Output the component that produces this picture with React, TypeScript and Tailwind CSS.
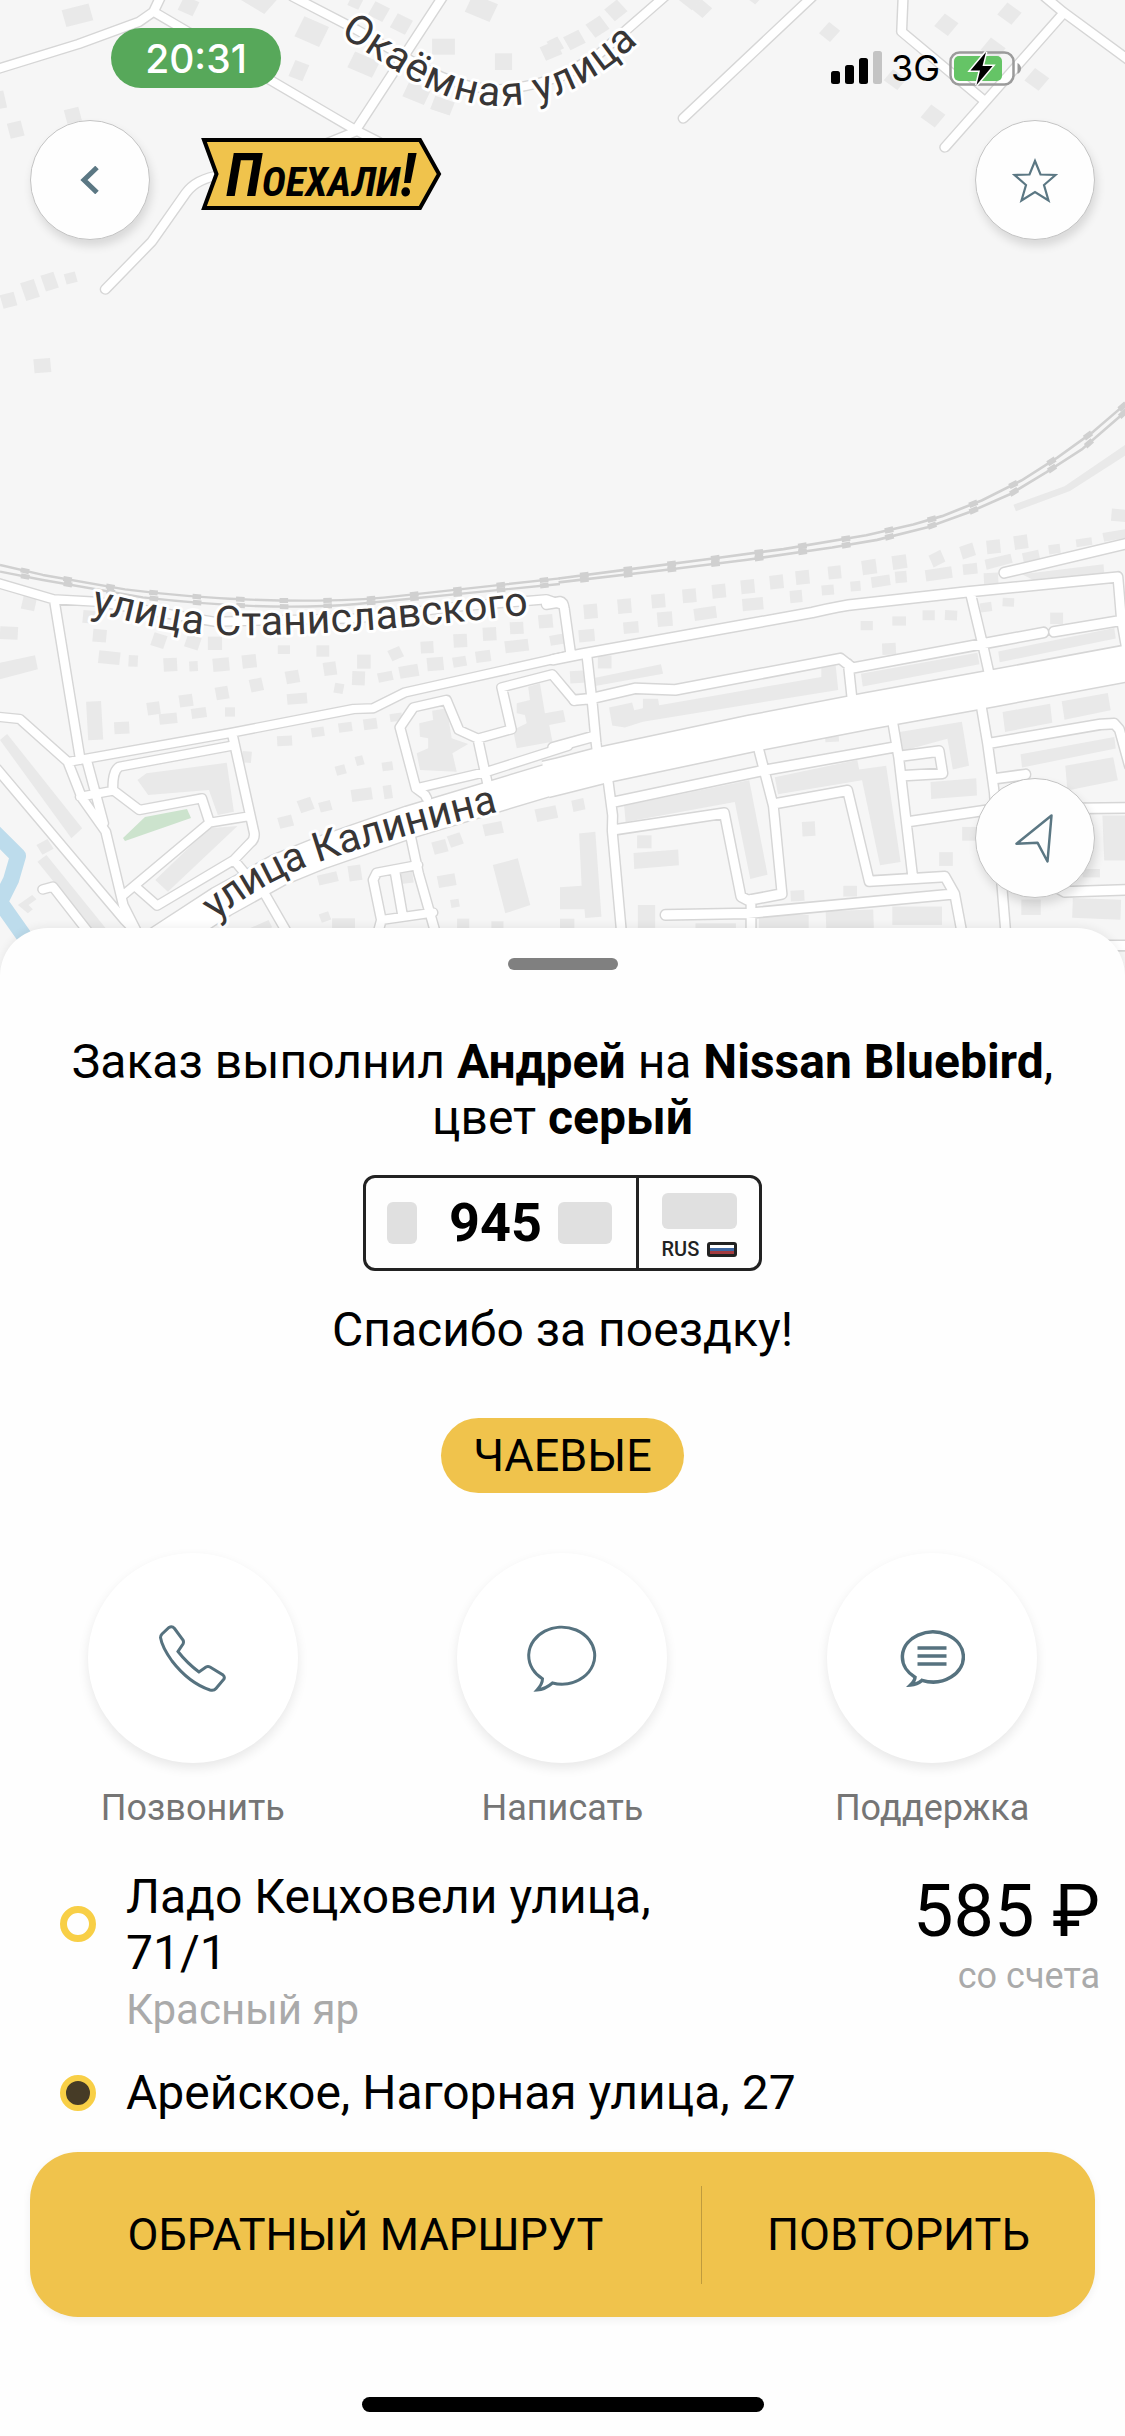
import { useState } from "react";

type Tile = {
  transform: string;
  roads: string[];
  wide: string[];
  rails: string[];
  blocks: string[];
  // x, y, width, height, rotation
  houses: number[][];
};

const TILES: Tile[] = [
  {
    transform: "scale(0.3571 0.3333)",
    roads: [
      "M-10 208L220 132L390 65L430 35L450 -10",
      "M430 35L995 390L1060 425",
      "M995 392L1240 -10",
      "M820 -10L1000 90L1180 200Q1290 268 1400 268Q1500 262 1600 215",
      "M295 868L425 725L520 580Q550 535 620 525L800 480L995 395",
    ],
    wide: [],
    rails: [],
    blocks: ["M675 0H775L740 42Z"],
    houses: [
      [178, 20, 78, 52, -15], [505, -5, 46, 46, 25], [835, 62, 76, 66, 25], [978, -10, 34, 34, 25],
      [1038, 12, 46, 46, 28], [1100, 48, 48, 48, 28], [1310, -5, 76, 58, 24], [1210, 116, 64, 48, 0],
      [1386, 160, 48, 50, 0], [1518, 130, 50, 44, -24], [980, 168, 76, 52, 25], [816, 186, 42, 52, 22],
      [1134, 254, 66, 50, 24], [1210, 296, 58, 42, 20], [-25, 275, 40, 52, -12], [183, 325, 42, 42, -14],
      [24, 366, 40, 46, -14], [64, 842, 40, 56, -18], [120, 820, 38, 50, -18], [182, 818, 32, 32, -15],
      [4, 880, 40, 42, -15], [95, 1076, 47, 42, -5],
    ],
  },
  {
    transform: "translate(560 0) scale(0.3604 0.3333)",
    roads: [
      "M-10 238L110 160L200 75L290 -10",
      "M342 355L700 -10",
      "M952 -10L948 95L1175 300",
      "M1395 42L1068 442",
      "M1345 -10L1395 35L1590 190",
    ],
    wide: [],
    rails: [],
    blocks: [],
    houses: [
      [-30, 115, 34, 40, -28], [16, 98, 48, 44, -28], [80, 56, 48, 48, -35], [132, 8, 46, 46, -40],
      [340, -25, 46, 46, 40], [374, 6, 40, 40, 42], [526, -20, 28, 28, 40], [728, 74, 40, 44, 40],
      [1048, 50, 48, 48, 38], [1222, 18, 50, 46, 38], [1176, 124, 52, 46, 38], [1298, 214, 50, 48, 38],
      [1010, 324, 50, 48, 38], [906, 218, 48, 42, 38],
    ],
  },
  {
    transform: "translate(0 500) scale(0.3571 0.3333)",
    roads: [
      "M-10 248L150 298L270 305L600 365L1000 355L1300 318L1450 305L1530 298L1568 312",
      "M152 300L225 780",
      "M-10 650L55 657L190 786L640 700L990 627L1045 625L1135 577L1590 468",
      "M645 738L335 800Q315 810 316 870L390 930L565 895L587 968L690 950",
      "M225 890L318 872",
      "M650 700L712 1000Q714 1018 700 1030L655 1080L440 1217L385 1165",
      "M587 968L340 1190",
      "M245 790L290 970",
      "M190 786L230 895L296 995L345 1215L385 1300",
      "M-10 805L350 1262L385 1300",
      "M120 1168L148 1160L250 1300",
      "M655 1080L690 1125",
      "M1195 895L1190 885L1165 865L1120 682L1158 622L1250 600L1285 690L1338 716L1432 688L1405 562L1546 523L1608 602",
      "M1338 716L1365 850",
      "M1165 865L1195 858L1365 815L1590 738",
      "M1150 1010L1172 1120L1220 1300",
      "M1170 1095L1055 1118L1045 1140L1068 1260L1058 1300M1068 1260L1212 1238",
      "M1105 1108L1128 1250",
      "M735 1170L805 1300",
    ],
    wide: ["M420 1345L620 1205L780 1110L900 1058L1150 965L1568 830L1620 818"],
    rails: [
      "M0 195L120 225L350 268Q600 302 850 302Q1000 302 1100 290L1568 235",
      "M0 215L120 240L400 292Q750 335 1000 312L1568 252",
    ],
    blocks: [
      "M0 720L20 702L230 985L200 1015Z",
      "M385 840L410 820L635 788L655 935L610 945L585 870L415 885Z",
      "M435 1140L585 985L665 978L470 1175Z",
      "M105 1085L130 1065L300 1290H260Z",
      "M1210 632L1251 625L1265 715L1311 732L1267 760L1279 815L1176 810L1167 760L1199 745V715L1176 710L1174 670L1213 660Z",
      "M1479 560L1512 550L1526 640L1577 630L1584 665L1538 675L1547 725L1447 745L1437 690L1475 670L1470 645L1447 640V610L1484 600Z",
      "M1380 1095L1450 1075L1485 1215L1415 1240Z",
      "M50 1215L90 1185L102 1198L80 1215L92 1228L78 1240Z",
      "M0 488L98 466L106 508L0 538Z",
    ],
    houses: [
      [62, 290, 38, 40, 12], [232, 332, 46, 38, 5], [260, 388, 38, 38, 5], [0, 380, 50, 38, 3],
      [426, 402, 38, 40, 18], [520, 408, 40, 38, 18], [582, 410, 40, 40, 0], [276, 454, 60, 38, 6],
      [360, 466, 26, 34, 3], [458, 474, 38, 40, -3], [530, 484, 24, 30, -3], [596, 474, 46, 40, -5],
      [678, 464, 40, 40, -6], [778, 436, 34, 26, 0], [886, 436, 36, 34, 0], [906, 486, 36, 40, -8],
      [800, 512, 38, 38, -10], [1000, 464, 38, 42, 0], [1090, 444, 36, 34, -25], [1178, 424, 36, 36, -3],
      [1270, 402, 38, 40, -3], [1352, 382, 38, 40, -3], [1428, 366, 38, 36, -3], [1508, 344, 40, 40, -5],
      [1540, 404, 40, 30, -10], [1058, 516, 42, 28, -12], [1118, 496, 54, 36, -10], [1196, 472, 46, 40, -5],
      [1268, 470, 38, 30, -10], [1332, 452, 42, 34, -8], [1414, 420, 66, 36, -7], [986, 514, 36, 42, 2],
      [936, 550, 26, 30, 10], [804, 580, 56, 32, -5], [700, 536, 36, 38, -12], [604, 560, 36, 38, -10],
      [502, 584, 38, 36, -8], [412, 606, 36, 38, -8], [446, 640, 50, 32, -6], [536, 624, 42, 30, -8],
      [630, 622, 28, 28, 0], [244, 604, 42, 116, -3], [320, 666, 42, 36, -3], [776, 708, 42, 30, -3],
      [872, 682, 36, 28, -8], [948, 668, 38, 28, -8], [1018, 656, 38, 32, -8], [1092, 640, 34, 24, -8],
      [940, 796, 28, 28, -15], [996, 768, 22, 28, -15], [1070, 786, 30, 26, -8], [678, 754, 26, 34, 5],
      [984, 866, 58, 36, -8], [1074, 856, 24, 40, -8], [836, 896, 40, 38, -20], [894, 904, 34, 30, -15],
      [780, 948, 40, 34, -15], [1212, 1022, 40, 38, -15], [1256, 1002, 38, 36, -20], [1354, 968, 54, 36, -12],
      [1500, 922, 60, 38, -12], [890, 1120, 56, 30, -14], [976, 1096, 36, 46, -8], [1120, 1110, 36, 40, -8],
      [1226, 1124, 50, 36, -10], [1262, 1198, 24, 24, -10], [896, 1238, 28, 26, -20], [930, 1255, 64, 34, 0],
      [1280, 1256, 34, 34, 0], [1376, 1264, 34, 24, 0], [108, 1024, 36, 34, -30], [700, 1272, 60, 24, -25],
    ],
  },
  {
    transform: "translate(560 360) scale(0.3604 0.3827)",
    roads: [
      "M-38 638L0 632Q10 634 12 650L30 770",
      "M-20 783L60 768L700 660Q780 642 825 638L1130 606L1548 567L1558 680",
      "M75 775L90 900L100 1000L108 1060",
      "M39 889L85 885L210 858L320 862L778 780L812 805L1165 743L1342 712",
      "M800 795L812 900",
      "M1138 606L1172 740L1198 850",
      "M1370 710L1560 680M1560 690L1575 770",
      "M-20 1013L95 983",
      "M1232 556L1580 478",
      "M132 1090L146 1190L145 1230L172 1510",
      "M150 1155L550 1075L925 1012",
      "M548 1005L592 1165L616 1395L522 1412L502 1402L456 1184L155 1227",
      "M592 1160L798 1125L858 1362L1068 1350L1095 1395L1118 1510",
      "M292 1450L520 1446L1085 1396",
      "M530 1410V1510",
      "M922 940L940 1040L978 1345",
      "M945 1035L1052 1022L1062 1080L955 1086",
      "M1168 900L1186 1000L1205 1130L1238 1510",
      "M1188 1002L1500 952L1538 950L1552 965L1580 1060",
      "M1200 1095L1292 1083",
      "M970 1206L1200 1174L1580 1170",
      "M1390 1175L1360 1200L1362 1370L1400 1390L1580 1384",
      "M1480 1530H1580",
    ],
    wide: ["M-40 1096L0 1087L120 1058L530 976L850 918L1200 858L1600 788"],
    rails: [
      "M-4 571L190 547L430 518L620 494L850 458L980 430L1060 408L1170 367L1280 315L1380 255L1480 187L1575 110",
      "M-4 581L280 550L520 522L755 490L880 470L1020 437L1135 398L1250 350L1350 293L1450 232L1575 130",
    ],
    blocks: [
      "M1258 378L1400 330L1568 222V250L1415 342L1265 395Z",
      "M98 830L280 795L286 820L98 852Z",
      "M136 908L200 895L206 915L230 910V885H272L275 902L725 828V805L765 798L772 862L230 945L180 960L145 955Z",
      "M835 820L1158 765L1164 795L840 853Z",
      "M1216 762L1538 700L1542 728L1220 790Z",
      "M178 1165L525 1098L576 1345L528 1356L485 1155L182 1207Z",
      "M596 1090L825 1045L830 1070L905 1060L945 1312L888 1320L838 1098L605 1135Z",
      "M942 972L1115 945L1135 1060L1090 1070L1075 990L950 1022Z",
      "M1228 920L1360 898L1366 948L1235 972Z",
      "M1392 892L1520 870L1528 915L1400 940Z",
      "M1278 1030L1538 985L1542 1015L1282 1065Z",
      "M1402 1060L1535 1038L1548 1098L1408 1125Z",
      "M1028 1103L1155 1093L1157 1138L1030 1147Z",
      "M53 1237L98 1233L115 1455L70 1458L68 1435H0V1378L60 1374Z",
      "M204 1288L328 1279L330 1320L206 1330Z",
      "M1282 560L1508 534L1510 556L1320 578Z",
      "M1505 1190H1568V1308H1510Z",
      "M1178 522L1250 506L1256 530L1184 548Z",
      "M1505 452L1568 442V465L1510 475Z",
    ],
    houses: [
      [66, 638, 38, 38, -5], [160, 624, 38, 38, -5], [254, 612, 38, 36, -5], [340, 598, 38, 36, -5],
      [422, 586, 38, 36, -6], [502, 574, 38, 36, -6], [582, 562, 38, 36, -6], [654, 550, 38, 36, -6],
      [744, 538, 36, 34, -6], [838, 522, 40, 38, -8], [922, 510, 40, 36, -8], [1028, 502, 36, 34, -25],
      [1112, 482, 38, 34, -18], [1184, 470, 38, 36, -6], [1260, 458, 38, 36, -8], [52, 704, 44, 32, -5],
      [176, 684, 42, 30, -5], [270, 658, 42, 38, -5], [372, 646, 62, 32, -8], [506, 622, 58, 32, -5],
      [638, 602, 34, 32, -5], [726, 588, 34, 26, -5], [806, 578, 28, 26, -5], [864, 564, 52, 28, -8],
      [930, 552, 32, 30, -5], [1014, 544, 74, 30, -8], [1118, 532, 40, 28, -6], [1284, 500, 46, 26, -12],
      [1356, 482, 32, 24, -8], [1432, 466, 44, 20, -8], [1530, 390, 40, 32, 5], [1176, 556, 40, 28, -3],
      [834, 682, 34, 24, 0], [922, 670, 38, 24, 0], [1006, 654, 34, 26, 0], [1068, 654, 34, 26, 3],
      [1166, 634, 32, 24, -8], [1228, 622, 32, 22, 3], [1360, 660, 36, 30, 0], [894, 740, 38, 30, -3],
      [105, 772, 38, 34, 0], [28, 812, 46, 32, -3], [34, 1148, 34, 30, -12], [672, 1206, 36, 38, -3],
      [214, 1242, 40, 34, 0], [1052, 1286, 38, 36, 0], [1116, 1220, 40, 36, 0], [216, 1424, 48, 60, 0],
      [640, 1386, 38, 28, -3], [786, 1374, 38, 28, 0], [376, 1472, 112, 20, 0], [552, 1450, 138, 40, 0],
      [738, 1438, 132, 50, -2], [922, 1428, 138, 48, 0], [1280, 1410, 54, 40, 0], [1422, 1408, 134, 52, 2],
      [1450, 1330, 48, 22, 0], [736, 984, 38, 14, -3], [0, 1460, 40, 30, 0],
    ],
  },
];

// Paths run through the middle of the letters
const LABELS = [
  { id: "okaemnaya", text: "Окаёмная улица", path: "M347 23C405 60 445 91 500 92C555 91 598 66 660 2" },
  { id: "stanislavskogo", text: "улица Станиславского", path: "M94 599C130 606 170 619 215 621C330 623 430 611 560 597" },
  { id: "kalinina", text: "улица Калинина", path: "M207 910C238 883 276 861 326 845C376 829 436 812 520 792" },
];

export default function App() {
  return (
    <main className="flex min-h-screen flex-col overflow-hidden bg-[#fefefe] text-black font-[Roboto,'Noto_Sans',sans-serif]">
      <section className="relative flex h-[928px] flex-col justify-between pb-[30px]">
        <StreetMap />
        <div className="relative">
          <StatusBar />
          <MapHeader />
        </div>
        <div className="relative flex justify-end px-[30px]">
          <RoundButton label="Моё местоположение">
            <svg className="h-[49px] w-[41px]" viewBox="0 0 41 49" fill="none" stroke="currentColor" strokeWidth={2.5} strokeLinejoin="round">
              <path d="M36.5 1.5L1.500 29.800L22.500 28.700L32.500 47.500Z" />
            </svg>
          </RoundButton>
        </div>
      </section>
      <OrderSheet />
    </main>
  );
}

function StatusBar() {
  return (
    <div className="flex h-[92px] items-start justify-between pl-[111px] pr-[103px] pt-7 font-[Inter,sans-serif]">
      <div className="flex h-[60px] w-[170px] items-center justify-center rounded-full bg-[#57a85a] text-[39px] leading-none text-white font-medium">
        20:31
      </div>
      <div className="flex h-[80px] items-center gap-[9px]">
        <svg className="h-[34px] w-[51px]" viewBox="0 0 51 34">
          <rect x="0" y="20" width="9" height="13" rx="2.5" />
          <rect x="14" y="14" width="9" height="19" rx="2.5" />
          <rect x="28" y="7" width="9" height="26" rx="2.5" />
          <rect x="42" y="0" width="9" height="33" rx="2.5" fill="#c4c4c4" />
        </svg>
        <span className="text-[36px] leading-none">3G</span>
        <svg className="h-[38px] w-[73px]" viewBox="0 0 73 38">
          <rect x="1.5" y="3.5" width="63" height="32" rx="9" fill="none" stroke="#9b9b9b" strokeWidth="2.5" />
          <rect x="5" y="7" width="48" height="25" rx="5" fill="#65c466" />
          <path d="M68.500 14Q72 16 72 19.500T68.500 25Z" fill="#9b9b9b" />
          <path d="M37 3L21.500 21.500H31L27.500 36L43.500 17H33.500Z" fill="#000" stroke="#fff" strokeWidth="3" paintOrder="stroke" />
        </svg>
      </div>
    </div>
  );
}

function MapHeader() {
  const [favorite, setFavorite] = useState(false);

  return (
    <header className="flex items-start px-[30px] pt-7">
      <RoundButton label="Назад">
        <svg className="h-7 w-5" viewBox="0 0 20 28" fill="none" stroke="currentColor" strokeWidth={5}>
          <path d="M17 1.500L4 14L17 26.500" />
        </svg>
      </RoundButton>
      <svg className="ml-[51px] mt-[18px] h-[72px] w-[241px]" viewBox="0 0 241 72" role="img" aria-label="Поехали!">
        <path d="M3 2H219L238 36L219 70H3L15.500 36Z" fill="#f0c34c" stroke="#000" strokeWidth="4" />
        <text x="25" y="58" className="font-bold italic font-['Liberation_Sans_Narrow','Roboto_Condensed',Roboto,sans-serif]">
          <tspan fontSize="60">П</tspan>
          <tspan fontSize="41">ОЕХАЛИ</tspan>
          <tspan fontSize="60">!</tspan>
        </text>
      </svg>
      <div className="ml-auto">
        <RoundButton label="В избранное" onClick={() => setFavorite(!favorite)}>
          <svg className="h-[45px] w-[46px]" viewBox="0 0 46 45" fill={favorite ? "currentColor" : "none"} stroke="currentColor" strokeWidth={2.2}>
            <path d="M23 3L28.500 16.500L43.500 17L32 27L36.500 42.500L23 34L9.500 42.500L14 27L2.500 17L17.500 16.500Z" />
          </svg>
        </RoundButton>
      </div>
    </header>
  );
}

function RoundButton({ label, onClick, children }: { label: string; onClick?: () => void; children: React.ReactNode }) {
  return (
    <button
      aria-label={label}
      onClick={onClick}
      className="flex size-[120px] items-center justify-center rounded-full border border-[#c4c4c4] bg-[#fefefe] text-[#5b7783] shadow-[2px_6px_10px_rgba(0,0,0,0.12)]"
    >
      {children}
    </button>
  );
}

function OrderSheet() {
  return (
    <section className="relative flex flex-1 flex-col rounded-t-[48px] bg-[#fefefe] pt-[30px] shadow-[0_-2px_8px_rgba(0,0,0,0.06)]">
      <div className="mx-auto h-3 w-[110px] rounded-full bg-[#808080]" />

      <div className="mt-16 flex flex-col items-center px-12 text-center text-[48px] leading-[56px]">
        <h1>
          Заказ выполнил <b>Андрей</b> на <b>Nissan Bluebird</b>, цвет <b>серый</b>
        </h1>
        <LicensePlate />
        <p className="mt-[31px]">Спасибо за поездку!</p>
        <button className="mt-15 h-[75px] rounded-full bg-[#f0c34c] px-8 text-[45px] leading-[75px]">ЧАЕВЫЕ</button>
      </div>

      <nav className="mt-15 grid grid-cols-3 px-2">
        <Action label="Позвонить">
          <svg className="h-[67px] w-[67px]" viewBox="0 0 67 67">
            <path d="M10 2.500Q13 0.500 15.500 3.500L24 15Q25 17 24 19L19 26.500Q28 38 40 47L47 42Q49 41 51 42L64 50Q66 52 65 54L57 63.500Q55 66 51 65Q30 58 13 36Q3 22 1.500 12.500Q1.500 10.500 3 9Z" />
          </svg>
        </Action>
        <Action label="Написать">
          <svg className="h-[67px] w-[70px]" viewBox="0 0 70 67">
            <path d="M15.500 53.800Q15.500 59 10 65Q18 64.500 25.500 58A33 28.500 0 1 0 15.500 53.800Z" />
          </svg>
        </Action>
        <Action label="Поддержка">
          <svg className="h-[58px] w-[66px]" viewBox="0 0 66 58" strokeWidth={3.5}>
            <path d="M16 48.200Q16 51.500 11.500 56Q18 55.500 23 51.300A30.500 25 0 1 0 16 48.200Z" />
            <path d="M18.500 19H47.500M18.500 27H47.500M18.500 35H47.500" />
          </svg>
        </Action>
      </nav>

      <div className="mt-10 flex justify-between pl-[60px] pr-[25px]">
        <ul className="flex flex-col gap-[26px]">
          <li className="flex items-center gap-[30px]">
            <span className="-mt-15 size-9 shrink-0 rounded-full border-[7px] border-[#f8cf46]" />
            <div>
              <p className="max-w-[560px] text-[48px] leading-[56px]">Ладо Кецховели улица, 71/1</p>
              <p className="text-[42px] leading-[58px] text-[#aaaaaa]">Красный яр</p>
            </div>
          </li>
          <li className="flex items-center gap-[30px]">
            <span className="size-9 shrink-0 rounded-full border-[6px] border-[#f8cf46] bg-[#463b26]" />
            <p className="text-[48px] leading-[56px]">Арейское, Нагорная улица, 27</p>
          </li>
        </ul>
        <div className="text-right">
          <p className="text-[72px] leading-[86px]">585 ₽</p>
          <p className="text-[36px] leading-[42px] text-[#aaaaaa]">со счета</p>
        </div>
      </div>

      <div className="mx-[30px] mt-[31px] flex h-[165px] items-center rounded-[48px] bg-[#f0c34c] text-[45px] shadow-[0_3px_8px_rgba(0,0,0,0.06)]">
        <button className="h-full w-[63%]">ОБРАТНЫЙ МАРШРУТ</button>
        <div className="h-[98px] w-px bg-[#bf9b3d]" />
        <button className="h-full flex-1">ПОВТОРИТЬ</button>
      </div>

      <div className="mx-auto mb-6 mt-20 h-[15px] w-[402px] rounded-full bg-black" />
    </section>
  );
}

function LicensePlate() {
  return (
    <div className="mt-[29px] flex h-24 w-[399px] rounded-xl border-[3px] border-[#222222]">
      <div className="flex flex-1 items-center justify-between border-r-[3px] border-[#222222] pl-[21px] pr-6">
        <span className="h-[42px] w-[30px] rounded-md bg-[#e0e0e0]" />
        <span className="pl-4 text-[54px] font-bold">945</span>
        <span className="h-[42px] w-[54px] rounded-md bg-[#e0e0e0]" />
      </div>
      <div className="flex w-[120px] flex-col items-center pt-[15px]">
        <span className="h-9 w-[75px] rounded-md bg-[#e0e0e0]" />
        <div className="mt-2 flex w-[75px] items-center justify-between">
          <span className="text-[20px] leading-6 font-medium text-[#222222]">RUS</span>
          <svg className="h-[15px] w-[30px]" viewBox="0 0 30 15">
            <rect width="30" height="15" rx="3" fill="#222222" />
            <path d="M3 3H27V6H3Z" fill="#fff" />
            <path d="M3 6H27V9H3Z" fill="#3d66a0" />
            <path d="M3 9H27V12H3Z" fill="#a33b3f" />
          </svg>
        </div>
      </div>
    </div>
  );
}

function Action({ label, children }: { label: string; children: React.ReactNode }) {
  return (
    <button className="flex flex-col items-center gap-6 text-[36px] leading-[42px] text-[#757575]">
      <span className="flex size-[210px] items-center justify-center rounded-full bg-white fill-none stroke-[#56727f] stroke-3 shadow-[0_5px_12px_rgba(0,0,0,0.09)]">
        {children}
      </span>
      {label}
    </button>
  );
}

function StreetMap() {
  return (
    <svg
      className="absolute inset-x-0 top-0 h-[980px] w-full bg-[#f6f6f6]"
      viewBox="0 0 1125 980"
      preserveAspectRatio="xMidYMin slice"
      fill="none"
      strokeLinejoin="round"
    >
      {TILES.map((tile) => (
        <g key={tile.transform} transform={tile.transform} fill="#e9e9e9">
          {tile.blocks.map((d) => (
            <path key={d} d={d} />
          ))}
          {tile.houses.map(([x, y, w, h, angle]) => (
            <rect key={`${x}-${y}`} x={x} y={y} width={w} height={h} transform={`rotate(${angle} ${x + w / 2} ${y + h / 2})`} />
          ))}
        </g>
      ))}

      {/* Park and river */}
      <path d="M123 838L145 817L187 809L191 818L125 841Z" fill="#cce3cd" />
      <path d="M-10 828L18 856L11 880L0 902L24 936" stroke="#bddcec" strokeWidth="16" />

      {/* Road outlines go under every road surface so that crossings stay open */}
      {TILES.map((tile) => (
        <g key={tile.transform} transform={tile.transform} stroke="#d6d6d6" strokeLinecap="round">
          <path d={tile.roads.join("")} strokeWidth={32} />
          <path d={tile.wide.join("")} strokeWidth={101} strokeLinecap="butt" />
        </g>
      ))}
      {TILES.map((tile) => (
        <g key={tile.transform} transform={tile.transform} stroke="#ffffff" strokeLinecap="round">
          <path d={tile.roads.join("")} strokeWidth={24} />
          <path d={tile.wide.join("")} strokeWidth={93} strokeLinecap="butt" />
        </g>
      ))}

      {TILES.map((tile) => (
        <g key={tile.transform} transform={tile.transform} stroke="#d0d0d0">
          <path d={tile.rails.join("")} strokeWidth={7} />
          <path d={tile.rails.join("")} strokeWidth={15} strokeDasharray="24 98" strokeDashoffset={-60} />
        </g>
      ))}

      {LABELS.map(({ id, text, path }) => (
        <g key={id}>
          <path id={id} d={path} />
          <text
            className="text-[41px] font-[Roboto,sans-serif]"
            fill="#383636"
            stroke="#ffffff"
            strokeWidth="6"
            paintOrder="stroke"
            dominantBaseline="central"
          >
            <textPath href={`#${id}`}>{text}</textPath>
          </text>
        </g>
      ))}
    </svg>
  );
}
